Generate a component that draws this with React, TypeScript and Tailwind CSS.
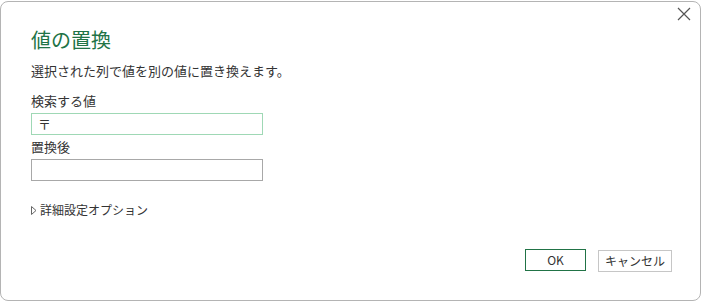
export default function App() {
  return (
    <div className="w-[702px] h-[303px] bg-white pt-px" style={{ fontFamily: '"Noto Sans CJK JP", "Noto Sans", sans-serif' }}>
      <div className="relative h-[300px] w-[701px] rounded-lg border border-[#b4b4b4] bg-white">
        <button className="absolute right-[9px] top-[5px] text-[#555]">
          <svg width="14" height="14" viewBox="0 0 14 14" fill="none" stroke="currentColor" strokeWidth="1.2">
            <path d="M1 1 L13 13 M13 1 L1 13" />
          </svg>
        </button>
        <div className="pl-[30px] pt-[24px]">
          <h1 className="text-[20px] leading-[28px] text-[#217346]">値の置換</h1>
          <p className="mt-[7px] text-[13px] leading-[20px] text-[#333]">選択された列で値を別の値に置き換えます。</p>
          <div className="mt-[11px] text-[13px] leading-[18px] text-[#333]">検索する値</div>
          <div className="mt-[3px] flex h-[22px] w-[232px] items-center border border-[#9fd8b5] px-[6px] text-[13px] text-[#333]">〒</div>
          <div className="mt-[3px] text-[13px] leading-[18px] text-[#333]">置換後</div>
          <div className="mt-[3px] h-[22px] w-[232px] border border-[#a8a8a8]"></div>
          <div className="mt-[20px] flex items-center gap-[3px] text-[12px] leading-[18px] text-[#333]">
            <svg width="6" height="9" viewBox="0 0 6 9" fill="none" stroke="#666" strokeWidth="1">
              <path d="M0.5 0.5 L5 4.5 L0.5 8.5 Z" />
            </svg>
            <span>詳細設定オプション</span>
          </div>
        </div>
        <div className="absolute right-[28px] top-[247px] flex gap-[12px]">
          <button className="h-[22px] w-[61px] border border-[#217346] text-[12px] text-[#333]">OK</button>
          <button className="mt-px h-[22px] w-[74px] border border-[#c6c6c6] text-[12px] text-[#333]">キャンセル</button>
        </div>
      </div>
    </div>
  );
}
